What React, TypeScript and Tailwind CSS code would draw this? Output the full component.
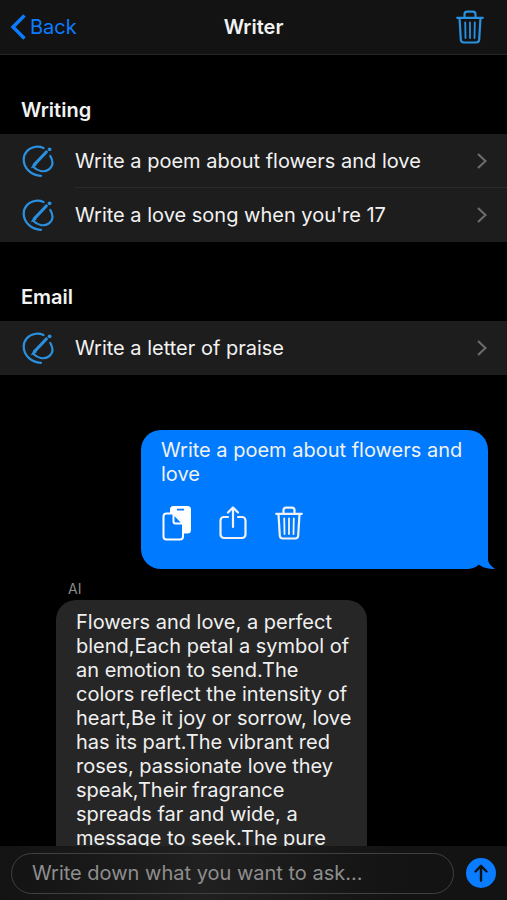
import type { ReactNode } from 'react';

type PromptGroup = {
  title: string;
  prompts: string[];
};

const groups: PromptGroup[] = [
  {
    title: 'Writing',
    prompts: ['Write a poem about flowers and love', "Write a love song when you're 17"],
  },
  { title: 'Email', prompts: ['Write a letter of praise'] },
];

const answer =
  'Flowers and love, a perfect blend,Each petal a symbol of an emotion to send.The colors reflect the intensity of heart,Be it joy or sorrow, love has its part.The vibrant red roses, passionate love they speak,Their fragrance spreads far and wide, a message to seek.The pure';

function TrashIcon({ className }: { className: string }) {
  return (
    <svg
      viewBox="0 0 28 34"
      fill="none"
      stroke="currentColor"
      strokeWidth="2.2"
      strokeLinecap="round"
      strokeLinejoin="round"
      className={className}
    >
      <path d="M1.2 7.8h25.6" />
      <path d="M8.5 7.5V4.2c0-1.6 1-2.6 2.6-2.6h5.8c1.6 0 2.6 1 2.6 2.6v3.3" />
      <path d="M3.5 8l1.3 21.5c.1 2 1.2 3 3 3h12.4c1.8 0 2.9-1 3-3L24.5 8" />
      <path strokeWidth="1.8" d="M9.2 12.5l.3 15.5M14 12.5V28M18.8 12.5l-.3 15.5" />
    </svg>
  );
}

function WriteIcon() {
  return (
    <svg viewBox="0 0 32 32" fill="none" stroke="currentColor" strokeLinecap="round" className="size-8 text-[#2a90e0]">
      <path strokeWidth="2.2" d="M21.5 3C18.5 1.7 15.5 1.4 12.5 2 6 3.3 1.7 8.5 1.7 14.5c0 9 7.8 16 17.3 16.3" />
      <path strokeWidth="2.2" d="M28.3 11c3.2 5.5 2.6 10.5-1.6 13.5-5 3.4-11.2 1.5-15.5-2.8" />
      <path strokeWidth="3.2" d="M24.3 7L12.5 19.5" />
      <path strokeWidth="1.6" d="M12.5 18.5l-1.8 3 3-1.5" />
      <circle cx="27.6" cy="4.3" r="1.9" fill="currentColor" stroke="none" />
    </svg>
  );
}

function CopyIcon() {
  return (
    <svg viewBox="0 0 30 36" fill="none" className="h-9 w-[30px]">
      <path
        fill="#fff"
        fillRule="evenodd"
        d="M11.5 1h14a3.5 3.5 0 0 1 3.5 3.5v20.5a3.5 3.5 0 0 1-3.5 3.5h-4V18L12 8H8V4.5A3.5 3.5 0 0 1 11.5 1zM15 3.8v1.8h7V3.8z"
      />
      <path
        stroke="#fff"
        strokeWidth="2"
        strokeLinejoin="round"
        d="M11.5 8.5H4.5A3 3 0 0 0 1.5 11.5v20a3 3 0 0 0 3 3h13.5a3 3 0 0 0 3-3V18.5z"
      />
      <path stroke="#fff" strokeWidth="2" strokeLinejoin="round" d="M11.5 8.5v8a2 2 0 0 0 2 2h7.5" />
    </svg>
  );
}

function ShareIcon() {
  return (
    <svg
      viewBox="0 0 28 34"
      fill="none"
      stroke="currentColor"
      strokeWidth="2.2"
      strokeLinecap="round"
      strokeLinejoin="round"
      className="h-[34px] w-7"
    >
      <path d="M9 11H5a3.5 3.5 0 0 0-3.5 3.5v14A3.5 3.5 0 0 0 5 32h18a3.5 3.5 0 0 0 3.5-3.5v-14A3.5 3.5 0 0 0 23 11h-4" />
      <path d="M14 21V1.5M9 6.5l5-5 5 5" />
    </svg>
  );
}

function IconButton({ label, children }: { label: string; children: ReactNode }) {
  return (
    <button type="button" aria-label={label} className="flex h-9 w-8 cursor-pointer items-center justify-center">
      {children}
    </button>
  );
}

function Header() {
  return (
    <header className="grid h-[55px] shrink-0 grid-cols-3 items-center border-b border-[#242424] bg-[#131313] px-[10px]">
      <button type="button" className="flex cursor-pointer items-center gap-1 justify-self-start text-[#0a7cff]">
        <svg viewBox="0 0 16 26" fill="none" stroke="currentColor" strokeWidth="3.4" className="h-[26px] w-4">
          <path d="M14.5 1.5L3 13l11.5 11.5" />
        </svg>
        <span>Back</span>
      </button>
      <h1 className="text-center font-semibold">Writer</h1>
      <button type="button" aria-label="Delete" className="mr-[13px] cursor-pointer justify-self-end text-[#2a90e0]">
        <TrashIcon className="h-[34px] w-7" />
      </button>
    </header>
  );
}

function PromptSection({ group }: { group: PromptGroup }) {
  return (
    <section>
      <h2 className="px-[21px] pt-[43px] pb-3 font-semibold">{group.title}</h2>
      <ul className="bg-[#1d1d1d]">
        {group.prompts.map((prompt, i) => (
          <li key={prompt}>
            <button type="button" className="flex w-full cursor-pointer items-center pl-[22px] text-left">
              <WriteIcon />
              <span
                className={`ml-[21px] flex h-[54px] flex-1 items-center justify-between pr-5 ${
                  i < group.prompts.length - 1 ? 'border-b border-[#2a2a2a]' : ''
                }`}
              >
                {prompt}
                <svg viewBox="0 0 10 16" fill="none" stroke="#6b6b6b" strokeWidth="2.2" className="h-4 w-[10px]">
                  <path d="M1 1l7.5 7L1 15" />
                </svg>
              </span>
            </button>
          </li>
        ))}
      </ul>
    </section>
  );
}

function UserMessage() {
  return (
    <div className="relative mr-[19px] ml-auto w-[347px] rounded-[20px] bg-[#007aff] pt-2 pr-4 pb-7 pl-5">
      <p>Write a poem about flowers and love</p>
      <div className="mt-[19px] flex gap-6">
        <IconButton label="Copy">
          <CopyIcon />
        </IconButton>
        <IconButton label="Share">
          <ShareIcon />
        </IconButton>
        <IconButton label="Delete message">
          <TrashIcon className="h-[34px] w-7" />
        </IconButton>
      </div>
      {/* bubble tail */}
      <svg viewBox="0 0 28 26" className="absolute -right-[7px] bottom-0 h-[26px] w-7">
        <path fill="#000" d="M2 26C6 25.5 9 24 12 21.500L28 26z" />
        <path fill="#007aff" d="M12 21.500C16 25 22 26 28 26c-4-3-7-6-7-10V0h-9z" />
      </svg>
    </div>
  );
}

function AiMessage() {
  return (
    <div className="mt-3 ml-14">
      <p className="pl-3 text-sm leading-4 text-[#8a8a8a]">AI</p>
      <div className="mt-[3px] w-[311px] rounded-[20px] bg-[#262626] pt-[10px] pr-3 pb-10 pl-5 text-[#f0f0f0]">
        {answer}
      </div>
    </div>
  );
}

function Composer() {
  return (
    <form
      className="flex h-[54px] shrink-0 items-center gap-3 bg-linear-to-r from-[#131313] via-[#202020] via-40% to-[#131313] to-80% px-[11px]"
      onSubmit={(e) => e.preventDefault()}
    >
      <input
        type="text"
        aria-label="Message"
        placeholder="Write down what you want to ask..."
        className="h-[41px] min-w-0 flex-1 rounded-full border border-[#404040] bg-transparent px-5 outline-none placeholder:text-[#8e8e8e]"
      />
      <button
        type="submit"
        aria-label="Send"
        className="flex size-[30px] shrink-0 cursor-pointer items-center justify-center rounded-full bg-[#0a7cff]"
      >
        <svg
          viewBox="0 0 16 18"
          fill="none"
          stroke="#131313"
          strokeWidth="2.4"
          strokeLinecap="round"
          strokeLinejoin="round"
          className="h-[18px] w-4"
        >
          <path d="M8 16.5V2M2.5 7.5L8 1.8l5.5 5.7" />
        </svg>
      </button>
    </form>
  );
}

export default function App() {
  return (
    <div className="flex h-screen flex-col bg-black font-['Inter','Liberation_Sans',sans-serif] text-[20px] leading-6 text-[#f2f2f2]">
      <Header />
      <main className="min-h-0 flex-1 overflow-hidden">
        {groups.map((group) => (
          <PromptSection key={group.title} group={group} />
        ))}
        <div className="pt-[55px]">
          <UserMessage />
          <AiMessage />
        </div>
      </main>
      <Composer />
    </div>
  );
}
